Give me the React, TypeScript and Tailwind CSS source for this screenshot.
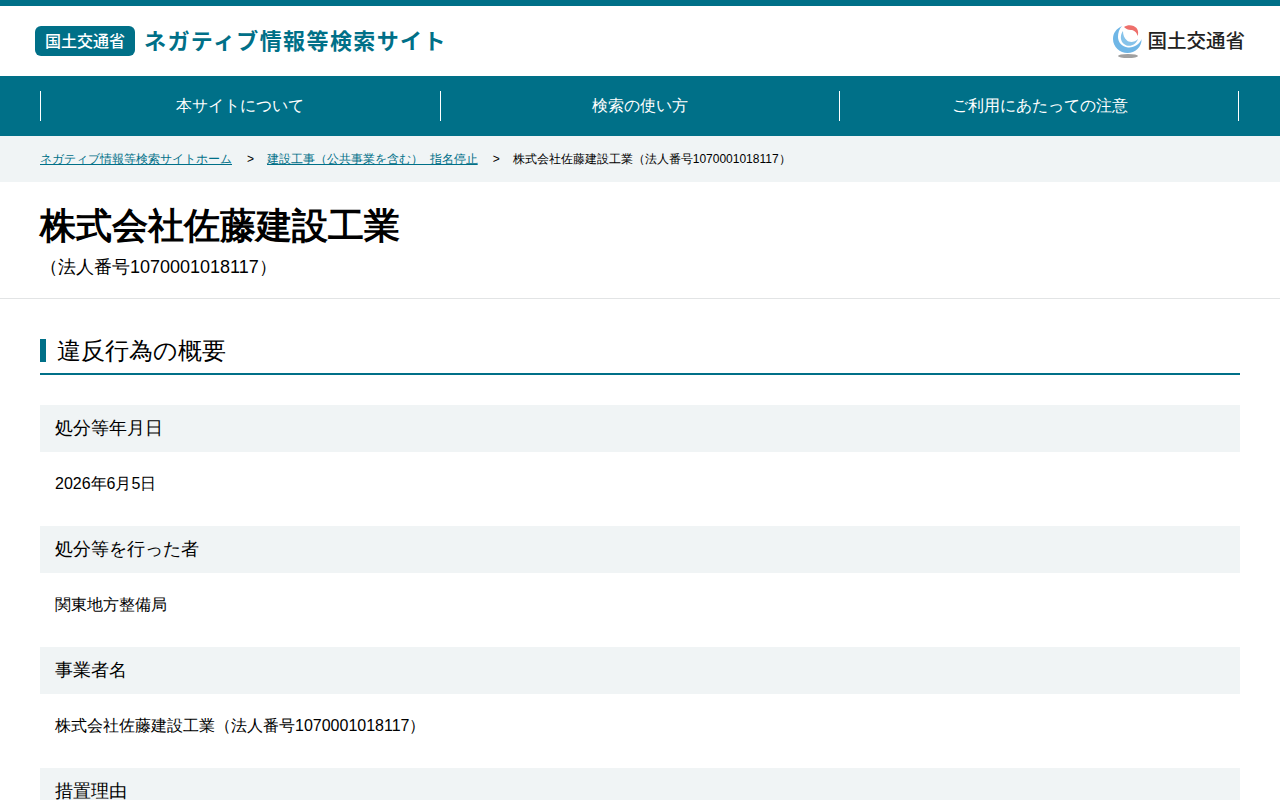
const font = { fontFamily: '"Liberation Sans", sans-serif' };
const logoFont = { fontFamily: '"Noto Sans CJK JP", sans-serif' };

const NAV_ITEMS = [
  { label: '本サイトについて', className: 'w-[399.8px]' },
  { label: '検索の使い方', className: 'w-[399.4px]' },
  { label: 'ご利用にあたっての注意', className: 'w-[399px] pl-[2px]' },
];

const ROWS = [
  { label: '処分等年月日', value: '2026年6月5日' },
  { label: '処分等を行った者', value: '関東地方整備局' },
  { label: '事業者名', value: '株式会社佐藤建設工業（法人番号1070001018117）' },
  { label: '措置理由', value: '' },
];

const MlitLogo = () => (
  <div className="flex items-center gap-[5px]">
    <svg width="29" height="34" viewBox="0 0 29 34">
      <path d="M9 2 C3 5 0 9 0 15 C0 23 7 29 14.5 29 C22 29 29 23 28.5 15 C27 20 21 24 15 23.5 C9 23 5 18 5 13 C5 9 6 5 9 2 Z" fill="#6fb6e6" />
      <path d="M10 7 C7 11 7 17 11 20 C16 24 23 21 25 15 C22 18 17 19 14 16.5 C11 14 10 11 10 7 Z" fill="#86c3ea" />
      <path d="M11 3 C15 0 21 1 23.5 4 C25.5 6.5 25.5 10 24.5 12 C24 8.5 21 6 18 6 C15 6 13 5 11 3 Z" fill="#ee6f6b" />
      <ellipse cx="15" cy="32" rx="10" ry="2" fill="#a0a0a0" />
    </svg>
    <span className="mb-[2px] text-[19.5px] font-medium leading-none text-[#222]">国土交通省</span>
  </div>
);

const App = () => {
  return (
    <div className="h-screen overflow-hidden bg-white text-black" style={font}>
      <header className="flex h-[76px] items-center justify-between border-t-[6px] border-[#007088] px-[35px]" style={logoFont}>
        <div className="flex items-center gap-[9px]">
          <span className="flex h-[30px] w-[100px] items-center justify-center rounded-[6px] bg-[#007088] pb-[2px] text-[16px] font-medium text-white">
            国土交通省
          </span>
          <span className="mb-[4px] text-[22px] font-bold leading-none tracking-[1.4px] text-[#007088]">ネガティブ情報等検索サイト</span>
        </div>
        <MlitLogo />
      </header>

      <nav className="flex h-[60px] items-center bg-[#007088] px-[40px]">
        <ul className="flex border-r border-white">
          {NAV_ITEMS.map((item) => (
            <li
              key={item.label}
              className={`flex h-[30px] items-center justify-center border-l border-white text-[16px] text-white ${item.className}`}
            >
              {item.label}
            </li>
          ))}
        </ul>
      </nav>

      <div className="flex h-[46px] items-center bg-[#f0f4f5] px-[40px] text-[12px]">
        <a className="text-[#007088] underline">ネガティブ情報等検索サイトホーム</a>
        <span className="ml-[15px] mr-[13px]">&gt;</span>
        <a className="text-[#007088] underline">建設工事（公共事業を含む）&nbsp;&nbsp;指名停止</a>
        <span className="ml-[15px] mr-[13px]">&gt;</span>
        <span>株式会社佐藤建設工業（法人番号1070001018117）</span>
      </div>

      <div className="h-[117px] border-b border-[#e2e4e5] px-[40px] pt-[20px]">
        <h1 className="text-[36px] font-bold leading-[48px]">株式会社佐藤建設工業</h1>
        <p className="mt-[5px] text-[18px] leading-[24px]">（法人番号1070001018117）</p>
      </div>

      <main className="px-[40px] pt-[40px]">
        <h2 className="mb-[30px] border-b-2 border-[#007088] pb-[11px] text-[24px]">
          <span className="block border-l-[6px] border-[#007088] pl-[11px] leading-[23px]">違反行為の概要</span>
        </h2>
        {ROWS.map((row) => (
          <section key={row.label} className="h-[121px]">
            <h3 className="flex h-[47px] items-center bg-[#f0f4f5] px-[15px] text-[18px]">{row.label}</h3>
            <p className="px-[15px] pt-[20px] text-[16px] leading-[24px]">{row.value}</p>
          </section>
        ))}
      </main>
    </div>
  );
};

export default App;
